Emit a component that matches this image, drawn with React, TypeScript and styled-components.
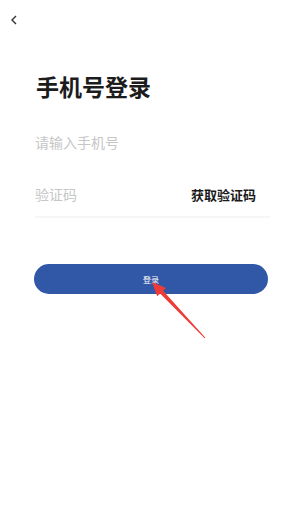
import * as React from "react";
import styled, { createGlobalStyle } from "styled-components";

const GlobalStyle = createGlobalStyle`
  html, body {
    margin: 0;
    padding: 0;
    background: #ffffff;
  }
  body {
    font-family: "Noto Sans CJK SC", "Noto Sans", sans-serif;
  }
`;

// Whole screen
const Page = styled.div`
  position: relative;
  width: 300px;
  height: 529px;
  background: #ffffff;
  overflow: hidden;
`;

// Top bar with the back chevron
const NavBar = styled.div`
  height: 40px;
  display: flex;
  align-items: center;
  padding-left: 9px;
`;

const BackButton = styled.button`
  display: flex;
  align-items: center;
  justify-content: center;
  padding: 0;
  border: none;
  background: none;
  width: 10px;
  height: 12px;
  cursor: pointer;
`;

const Content = styled.div`
  padding: 0 30px 0 35px;
  display: flex;
  flex-direction: column;
`;

const Title = styled.h1`
  margin: 30px 0 0 1px;
  font-size: 23px;
  line-height: 32px;
  font-weight: 700;
  color: #1c1c1c;
`;

// One input row of the form
const Field = styled.div<{ $first?: boolean; $divider?: boolean }>`
  height: 44px;
  margin-top: ${(p) => (p.$first ? "18px" : "8px")};
  display: flex;
  align-items: center;
  justify-content: space-between;
  border-bottom: ${(p) => (p.$divider ? "2px solid #f6f6f6" : "none")};
`;

const Input = styled.input`
  flex: 1;
  min-width: 0;
  border: none;
  outline: none;
  padding: 0;
  background: transparent;
  font-family: "Noto Sans CJK SC", sans-serif;
  font-size: 14px;
  color: #333;

  &::placeholder {
    color: #c6c6c6;
  }
`;

const CodeLink = styled.span`
  font-size: 13px;
  font-weight: 700;
  color: #1a1a1a;
  margin-right: 14px;
  white-space: nowrap;
`;

const SubmitButton = styled.button`
  margin: 46px 2px 0 -1px;
  height: 30px;
  border: none;
  border-radius: 15px;
  background: #3157a7;
  color: #ffffff;
  font-family: "Noto Sans CJK SC", sans-serif;
  font-size: 8px;
  display: flex;
  align-items: center;
  justify-content: center;
  cursor: pointer;
`;

// Red annotation arrow drawn over the page
const Annotation = styled.svg`
  position: absolute;
  left: 0;
  top: 0;
  pointer-events: none;
`;

const App: React.FC = () => {
  return (
    <Page>
      <GlobalStyle />
      <NavBar>
        <BackButton aria-label="back">
          <svg width="8" height="10" viewBox="0 0 8 10">
            <path d="M6 1 L2 5 L6 9" fill="none" stroke="#333" strokeWidth="1.4" />
          </svg>
        </BackButton>
      </NavBar>
      <Content>
        <Title>手机号登录</Title>
        <Field $first>
          <Input placeholder="请输入手机号" />
        </Field>
        <Field $divider>
          <Input placeholder="验证码" />
          <CodeLink>获取验证码</CodeLink>
        </Field>
        <SubmitButton>登录</SubmitButton>
      </Content>
      <Annotation width="300" height="529" viewBox="0 0 300 529">
        <polygon
          points="152,282 166,288.1 163.1,290.8 205.4,337.7 204.6,338.3 160.1,293.6 157.2,296.3"
          fill="#ee3b36"
        />
      </Annotation>
    </Page>
  );
};

export default App;
